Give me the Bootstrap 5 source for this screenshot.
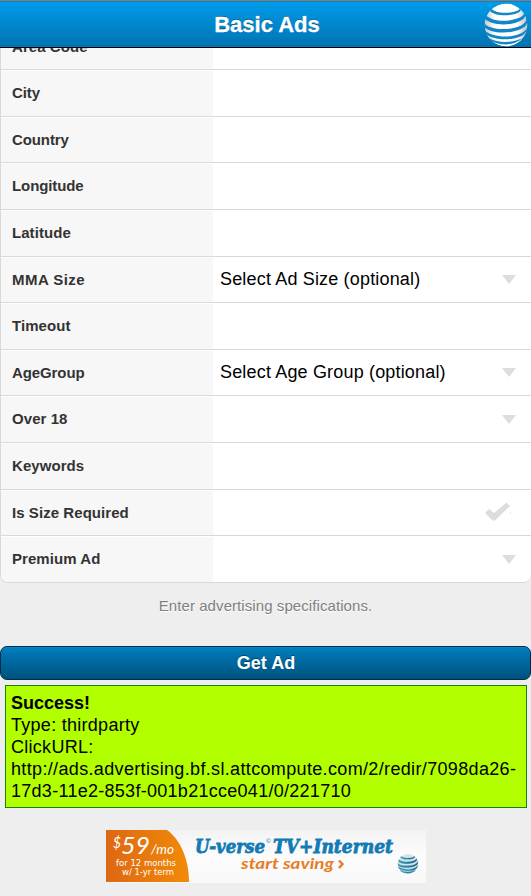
<!DOCTYPE html>
<html lang="en">
<head>
<meta charset="utf-8">
<meta name="viewport" content="width=device-width, initial-scale=1">
<title>Basic Ads</title>
<link href="https://cdn.jsdelivr.net/npm/bootstrap@5.3.0/dist/css/bootstrap.min.css" rel="stylesheet">
<style>
body{font-family:"Liberation Sans",Arial,sans-serif;background:#eee;color:#000;height:896px;overflow:hidden}
.app-header{height:48px;background:linear-gradient(#009ded,#0073b0);border-top:1px solid #7f7f7f;border-bottom:1px solid #000;box-shadow:inset 0 1px #1580bd}
.app-title{font-size:22px;line-height:47px;font-weight:700;color:#fff;padding-left:3px;-webkit-text-stroke:.3px #fff;text-shadow:0 -1px 0 rgba(0,0,0,.45)}
.globe-slot{right:3px;top:2px;line-height:0}
.scroll-area{height:535px;overflow:hidden}
.ad-fields{margin-top:-25.4px;border:1px solid #d9d9d9;border-right:0;border-radius:8px;overflow:hidden;background:#fff}
.field-row{height:46.6px;border-bottom:1px solid #d9d9d9}
.field-row:last-child{border-bottom:0;height:45.8px}
.field-label{width:212px;background:#f7f7f7;border-top:1px solid #fff;color:#333;font-size:15px;font-weight:700;padding-left:11px;letter-spacing:.06px}
.label-wide{letter-spacing:.45px}
.label-snug{letter-spacing:-.1px}
.field-value{font-size:18px;padding:0 15px 0 7px;letter-spacing:.17px}
.hint{font-size:15px;line-height:20px;color:#808080;margin-top:13px;letter-spacing:.08px;text-shadow:0 1px #fff}
.btn-ad{height:34px;margin-top:30px;border:1px solid #002e47;border-radius:7px;background:linear-gradient(#007ebf,#00517b);color:#fff;font-size:18px;font-weight:700;line-height:32px;padding:0 0 0 1px;text-shadow:0 -1px rgba(0,0,0,.4);box-shadow:inset 0 1px #0588c8}
.btn-ad:hover{color:#fff}
.result-box{margin:5px 4px 0 5px;height:123px;border:1px solid #168016;background:#b2ff00;font-size:18px;line-height:22px;padding:6px 5px;letter-spacing:.28px}
.result-box strong{letter-spacing:0}
.click-url{letter-spacing:.345px;white-space:nowrap}
.ad-banner{margin:22px auto 0 106px;width:320px;line-height:0}
</style>
<script src="https://cdn.jsdelivr.net/npm/bootstrap@5.3.0/dist/js/bootstrap.bundle.min.js"></script>
</head>
<body>
<header class="app-header position-relative text-center">
  <h1 class="app-title m-0">Basic Ads</h1>
  <div class="globe-slot position-absolute">
    <svg width="44" height="44" viewBox="0 0 44 44">
      <defs>
        <linearGradient id="sheen"><stop offset="0" stop-color="#c4cace"/><stop offset=".25" stop-color="#fff"/><stop offset=".75" stop-color="#fff"/><stop offset="1" stop-color="#b8bdc1"/></linearGradient>
        <clipPath id="ball"><circle cx="22" cy="22" r="21.5"/></clipPath>
        <g id="globe-bands">
          <path d="M7 5.500C10 9 18 10.500 26 9.500C32 8.700 36 7.500 36 4.500C39 8.500 33 11 26 12C17 13 9 11.500 6 8Z"/>
          <path d="M2 12C6 17 16 18.500 25 17.500C35 16 41 13 40 9C44.500 15 36 19.500 26 21C15 22.500 4 20 0 15Z"/>
          <path d="M0 20C4 25.500 16 27 27 25.500C37 24 43 20 42.500 15C46 23 37 27.500 27 29C15 30.500 4 28.500 0 24Z"/>
          <path d="M0 27C6 32.500 17 34.500 28 33C37 31.500 42 28 43.500 24C43 32 35 35 27 36C16 37 6 35 1 30.500Z"/>
          <path d="M6 35.500C13 39.500 26 40.500 38 35.500C34 39.500 28 41.300 22 41.500C16 41.500 11 40 6 37.500Z"/>
        </g>
      </defs>
      <g clip-path="url(#ball)"><circle cx="22" cy="22" r="21.500" fill="url(#sheen)"/><use href="#globe-bands" fill="#1286c8"/></g>
    </svg>
  </div>
</header>
<main>
  <div class="scroll-area">
    <div class="ad-fields">
      <div class="field-row d-flex"><div class="field-label d-flex align-items-center">Area Code</div></div>
      <div class="field-row d-flex"><div class="field-label d-flex align-items-center label-snug">City</div></div>
      <div class="field-row d-flex"><div class="field-label d-flex align-items-center label-snug">Country</div></div>
      <div class="field-row d-flex"><div class="field-label d-flex align-items-center label-snug">Longitude</div></div>
      <div class="field-row d-flex"><div class="field-label d-flex align-items-center">Latitude</div></div>
      <div class="field-row d-flex"><div class="field-label d-flex align-items-center label-wide">MMA Size</div><div class="field-value flex-grow-1 d-flex align-items-center justify-content-between"><span>Select Ad Size (optional)</span><svg width="14" height="9"><path d="M0 0H14L7 9Z" fill="#ddd"/></svg></div></div>
      <div class="field-row d-flex"><div class="field-label d-flex align-items-center">Timeout</div></div>
      <div class="field-row d-flex"><div class="field-label d-flex align-items-center label-snug">AgeGroup</div><div class="field-value flex-grow-1 d-flex align-items-center justify-content-between"><span>Select Age Group (optional)</span><svg width="14" height="9"><path d="M0 0H14L7 9Z" fill="#ddd"/></svg></div></div>
      <div class="field-row d-flex"><div class="field-label d-flex align-items-center">Over 18</div><div class="field-value flex-grow-1 d-flex align-items-center justify-content-end"><svg width="14" height="9"><path d="M0 0H14L7 9Z" fill="#ddd"/></svg></div></div>
      <div class="field-row d-flex"><div class="field-label d-flex align-items-center">Keywords</div></div>
      <div class="field-row d-flex"><div class="field-label d-flex align-items-center">Is Size Required</div><div class="field-value flex-grow-1 d-flex align-items-center justify-content-end"><svg width="31" height="20"><path d="M0 11L4 7L9 11L21.500 0.500L25 4L10.500 18Q9 19.500 7 18Z" fill="#ddd"/><path d="M25.500 10.500v1.500" stroke="#ddd"/></svg></div></div>
      <div class="field-row d-flex"><div class="field-label d-flex align-items-center">Premium Ad</div><div class="field-value flex-grow-1 d-flex align-items-center justify-content-end"><svg width="14" height="9"><path d="M0 0H14L7 9Z" fill="#ddd"/></svg></div></div>
    </div>
  </div>
  <p class="hint text-center mb-0">Enter advertising specifications.</p>
  <button type="button" class="btn btn-ad w-100 d-block">Get Ad</button>
  <div class="result-box"><strong>Success!</strong><br>Type: thirdparty<br>ClickURL:<br><span class="click-url">http://ads.advertising.bf.sl.attcompute.com/2/redir/7098da26-</span><br>17d3-11e2-853f-001b21cce041/0/221710</div>
  <div class="ad-banner">
    <svg width="320" height="53" viewBox="0 0 320 53">
      <defs>
        <linearGradient id="paper" x2="0" y2="1"><stop offset="0" stop-color="#f3f3f3"/><stop offset=".5" stop-color="#fcfcfc"/><stop offset="1" stop-color="#f8f8f8"/></linearGradient>
        <linearGradient id="orange" x2="1" y2="0"><stop offset="0" stop-color="#dd6812"/><stop offset="1" stop-color="#f28a08"/></linearGradient>
        <linearGradient id="sphere" x2="1" y2=".3"><stop offset="0" stop-color="#6fa5b5"/><stop offset=".5" stop-color="#2b8fc4"/><stop offset="1" stop-color="#175f80"/></linearGradient>
      </defs>
      <rect width="320" height="53" fill="url(#paper)"/>
      <path d="M0 0H61C74 9 83 29 83 52H0Z" fill="url(#orange)"/>
      <g fill="#fff">
        <g font-family="Lato, sans-serif" font-style="italic">
          <text x="7" y="18" font-size="15" textLength="8" lengthAdjust="spacingAndGlyphs">$</text>
          <text x="15" y="24" font-size="24" textLength="29" lengthAdjust="spacingAndGlyphs">59</text>
          <text x="45" y="24" font-size="14" textLength="23" lengthAdjust="spacingAndGlyphs">/mo</text>
        </g>
        <g font-family="DejaVu Sans, sans-serif" font-size="8.500">
          <text x="10" y="36" textLength="60" lengthAdjust="spacingAndGlyphs">for 12 months</text>
          <text x="16" y="45" textLength="52" lengthAdjust="spacingAndGlyphs">w/ 1-yr term</text>
        </g>
      </g>
      <g fill="#127bb5" stroke="#127bb5" stroke-width=".8" font-family="DejaVu Serif, serif" font-weight="700" font-style="italic" font-size="18">
        <text x="89" y="23" textLength="70" lengthAdjust="spacingAndGlyphs">U-verse</text>
        <text x="167" y="23" textLength="120" lengthAdjust="spacingAndGlyphs">TV+Internet</text>
      </g>
      <text x="160" y="13" font-family="Lato, sans-serif" font-size="6" fill="#127bb5">©</text>
      <text x="135" y="39" font-family="Lato, sans-serif" font-weight="700" font-style="italic" font-size="16" fill="#e87b24" textLength="93" lengthAdjust="spacingAndGlyphs">start saving</text>
      <path d="M233 30.500L236.500 34L233 38" fill="none" stroke="#e87b24" stroke-width="2.400"/>
      <g transform="translate(291.500 23.500) scale(.475)" clip-path="url(#ball)"><circle cx="22" cy="22" r="21.500" fill="#d8e6ea"/><use href="#globe-bands" fill="url(#sphere)" stroke="#3a89ab" stroke-width=".8"/></g>
    </svg>
  </div>
</main>
</body>
</html>
